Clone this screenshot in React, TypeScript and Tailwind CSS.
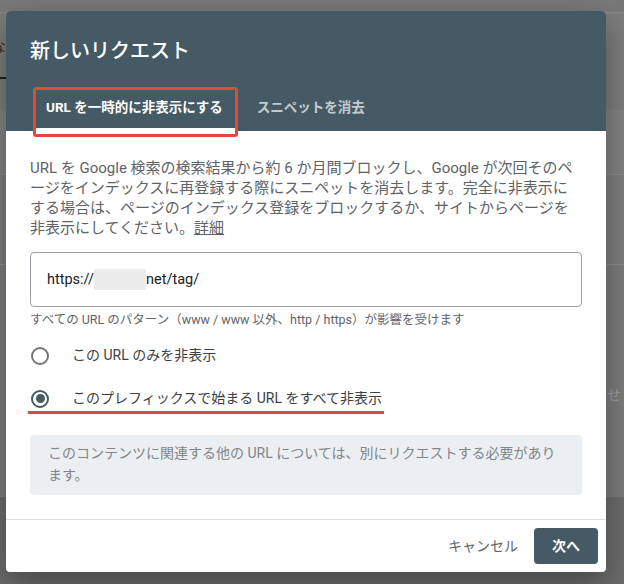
import React from 'react';

interface RadioProps {
  checked?: boolean;
  label: string;
  marked?: boolean;
}

const RadioRow: React.FC<RadioProps> = ({ checked, label, marked }) => (
  <label className="relative flex items-center h-[43px] cursor-pointer">
    {checked ? (
      <span className="ml-[1px] w-[18px] h-[18px] rounded-full border-2 border-[#455a64] flex items-center justify-center">
        <span className="w-[9px] h-[9px] rounded-full bg-[#455a64]" />
      </span>
    ) : (
      <span className="ml-[1px] w-[18px] h-[18px] rounded-full border-2 border-[#757575]" />
    )}
    <span className="ml-[23px] text-[14px] text-[#3c4043]">{label}</span>
    {marked && <span className="absolute left-[-2px] top-[34px] w-[356px] h-[3px] bg-[#e5483b]" />}
  </label>
);

const App: React.FC = () => {
  return (
    <div className="relative w-[624px] h-[584px] overflow-hidden bg-[#7c7c7c] font-[family-name:Roboto,'Noto_Sans_CJK_JP',sans-serif]">
      {/* page behind the overlay */}
      <div className="h-[13px] bg-[#797979] border-b border-[#8a8a8a]" />
      <div className="h-[97px] bg-[#7d7d7d] pt-[24px]">
        <span className="block -ml-[9px] text-[15px] leading-[20px] text-[#2e2e2e]">な</span>
        <div className="mt-[20px] w-[8px] h-[2px] bg-[#1f1f1f]" />
      </div>
      <div className="h-[65px] bg-[#828282] border-b border-[#8c8c8c]" />
      <div className="h-[90px] bg-[#7d7d7d] border-b border-[#8c8c8c]" />
      <div className="h-[232px] bg-[#7c7c7c] flex justify-end pt-[121px]">
        <span className="text-[14px] leading-[18px] text-[#9c9c9c] mr-[3px]">ませ</span>
      </div>
      <div className="h-[87px] bg-[#6c6c6c]" />

      {/* dialog */}
      <div className="absolute left-[6px] top-[11px] w-[600px] rounded-[4px] overflow-hidden bg-white shadow-[0_12px_32px_rgba(0,0,0,0.35)]">
        <div className="bg-[#455a64] px-6 pt-[26px]">
          <h2 className="text-[20px] leading-[28px] font-medium text-white">新しいリクエスト</h2>
          <div className="mt-[18px] ml-[3px] flex h-12">
            <div className="relative flex items-center px-[13px]">
              <span className="text-[13.5px] font-bold text-white">URL を一時的に非表示にする</span>
              <span className="absolute left-0 right-0 bottom-0 h-[3px] bg-white" />
              <span className="absolute left-0 top-[4px] w-[205px] h-[50px] rounded-[3px] border-[3px] border-[#e5483b]" />
            </div>
            <div className="flex items-center pl-[21px]">
              <span className="text-[13.5px] font-bold text-white/70">スニペットを消去</span>
            </div>
          </div>
        </div>

        <div className="px-6 pt-[27px] pb-6 border-b border-[#e0e0e0]">
          <p className="text-[15px] leading-[20px] text-[#5f6368] whitespace-nowrap">
            URL を Google 検索の検索結果から約 6 か月間ブロックし、Google が次回そのペ
            <br />
            ージをインデックスに再登録する際にスニペットを消去します。完全に非表示に
            <br />
            する場合は、ページのインデックス登録をブロックするか、サイトからページを
            <br />
            非表示にしてください。<span className="underline">詳細</span>
          </p>

          <div className="mt-[14px] h-[55px] rounded-[4px] border border-[#9aa0a6] flex items-center pl-4 text-[14.5px] text-[#202124]">
            https://
            <span className="inline-block w-[52px] h-[21px] bg-[#ececec]" />
            net/tag/
          </div>
          <p className="mt-[5px] text-[12.5px] leading-[16px] text-[#5f6368]">
            すべての URL のパターン（www / www 以外、http / https）が影響を受けます
          </p>

          <div className="mt-[6px]">
            <RadioRow label="この URL のみを非表示" />
            <RadioRow checked marked label="このプレフィックスで始まる URL をすべて非表示" />
          </div>

          <div className="mt-[15px] rounded-[4px] bg-[#eceff1] px-[18px] pt-[7px] pb-[9px] text-[14px] leading-[22px] text-[#80868b]">
            このコンテンツに関連する他の URL については、別にリクエストする必要があります。
          </div>
        </div>

        <div className="flex justify-end items-center gap-2 h-[52px] pr-2">
          <button className="px-2 h-9 text-[14px] text-[#5f6368]">キャンセル</button>
          <button className="w-16 h-9 rounded-[4px] bg-[#455a64] text-white text-[14px] font-bold">次へ</button>
        </div>
      </div>
    </div>
  );
};

export default App;
